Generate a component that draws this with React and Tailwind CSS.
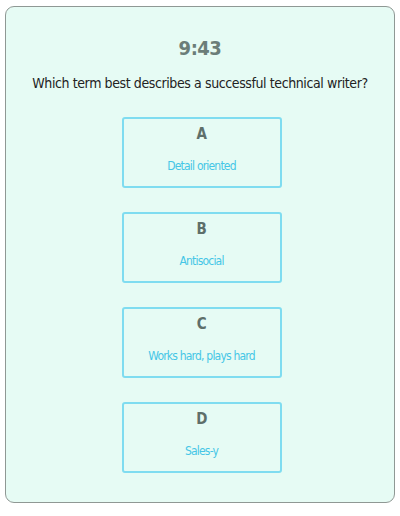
import React from 'react';

const options = [
  { letter: 'A', text: 'Detail oriented' },
  { letter: 'B', text: 'Antisocial' },
  { letter: 'C', text: 'Works hard, plays hard' },
  { letter: 'D', text: 'Sales-y' },
];

const font = { fontFamily: '"DejaVu Sans Condensed", "DejaVu Sans", sans-serif' };

export default function App() {
  return (
    <div className="w-[400px] h-[516px] bg-white pt-[6px] px-[5px]" style={font}>
      <div className="w-[390px] h-[497px] rounded-[9px] border border-[#8f9894] bg-[#e6fbf4] pt-[28px] flex flex-col items-center">
        {/* Timer */}
        <div className="text-[20px] leading-[26px] font-bold tracking-[-0.5px] text-[#6b7d78]">9:43</div>
        <div className="mt-[12px] text-[14px] leading-[20px] text-[#222] tracking-[-0.4px]">
          Which term best describes a successful technical writer?
        </div>

        {/* Answers */}
        <div className="mt-[24px] ml-[3px] flex flex-col gap-[24px]">
          {options.map((o) => (
            <button
              key={o.letter}
              className="w-[160px] h-[71px] border-2 border-[#7fdcf0] rounded-[3px] flex flex-col items-center pt-[6px]"
            >
              <span className="text-[15px] leading-[18px] font-bold tracking-[-0.5px] text-[#5e6f6a]">{o.letter}</span>
              <span className="mt-[15px] text-[12px] leading-[16px] tracking-[-0.8px] text-[#45c6e6]">{o.text}</span>
            </button>
          ))}
        </div>
      </div>
    </div>
  );
}
